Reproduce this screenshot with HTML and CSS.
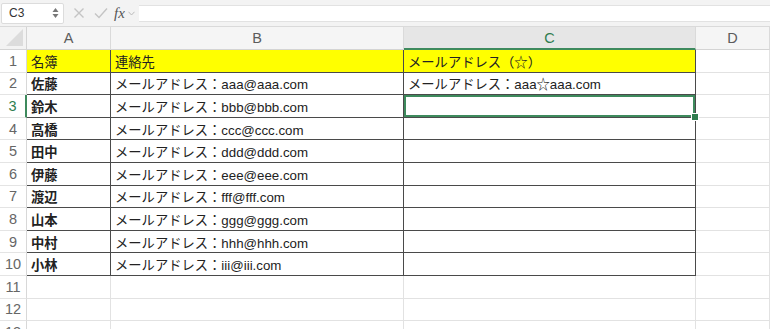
FILE: index.html
```html
<!DOCTYPE html>
<html lang="ja">
<head>
    <meta charset="UTF-8">
    <meta name="viewport" content="width=device-width, initial-scale=1.0">
    <title>名簿</title>
    <link rel="stylesheet" href="styles.css">
</head>
<body>
    <!-- 数式バー -->
    <div class="toolbar">
        <div class="namebox">
            <span>C3</span>
            <svg class="spin" width="7" height="12" viewBox="0 0 7 12">
                <path d="M3.5 1 L6.5 5 L0.5 5 Z" fill="#777"/>
                <path d="M3.5 11 L6.5 7 L0.5 7 Z" fill="#777"/>
            </svg>
        </div>
        <svg class="tool-icon cancel" width="12" height="12" viewBox="0 0 12 12">
            <path d="M1.5 1.5 L10.5 10.5 M10.5 1.5 L1.5 10.5" stroke="#c4c4c4" stroke-width="1.4" fill="none"/>
        </svg>
        <svg class="tool-icon ok" width="14" height="12" viewBox="0 0 14 12">
            <path d="M1 6.5 L5 10.5 L13 1.5" stroke="#c4c4c4" stroke-width="1.4" fill="none"/>
        </svg>
        <span class="fx">fx</span>
        <svg class="chev" width="7" height="5" viewBox="0 0 7 5">
            <path d="M0.5 0.8 L3.5 4 L6.5 0.8" stroke="#bbb" stroke-width="1" fill="none"/>
        </svg>
        <div class="formula"></div>
    </div>

    <!-- シート -->
    <div class="sheet">
        <div class="corner"><div class="tri"></div></div>
        <div class="col-head">A</div>
        <div class="col-head">B</div>
        <div class="col-head active">C</div>
        <div class="col-head">D</div>

        <div class="row-head">1</div>
        <div class="cell data yellow">名簿</div>
        <div class="cell data yellow">連絡先</div>
        <div class="cell data yellow">メールアドレス（☆）</div>
        <div class="cell"></div>

        <div class="row-head">2</div>
        <div class="cell data name">佐藤</div>
        <div class="cell data">メールアドレス：aaa@aaa.com</div>
        <div class="cell data">メールアドレス：aaa☆aaa.com</div>
        <div class="cell"></div>

        <div class="row-head active">3</div>
        <div class="cell data name">鈴木</div>
        <div class="cell data">メールアドレス：bbb@bbb.com</div>
        <div class="cell data selected"><span class="handle"></span></div>
        <div class="cell"></div>

        <div class="row-head">4</div>
        <div class="cell data name">高橋</div>
        <div class="cell data">メールアドレス：ccc@ccc.com</div>
        <div class="cell data"></div>
        <div class="cell"></div>

        <div class="row-head">5</div>
        <div class="cell data name">田中</div>
        <div class="cell data">メールアドレス：ddd@ddd.com</div>
        <div class="cell data"></div>
        <div class="cell"></div>

        <div class="row-head">6</div>
        <div class="cell data name">伊藤</div>
        <div class="cell data">メールアドレス：eee@eee.com</div>
        <div class="cell data"></div>
        <div class="cell"></div>

        <div class="row-head">7</div>
        <div class="cell data name">渡辺</div>
        <div class="cell data">メールアドレス：fff@fff.com</div>
        <div class="cell data"></div>
        <div class="cell"></div>

        <div class="row-head">8</div>
        <div class="cell data name">山本</div>
        <div class="cell data">メールアドレス：ggg@ggg.com</div>
        <div class="cell data"></div>
        <div class="cell"></div>

        <div class="row-head">9</div>
        <div class="cell data name">中村</div>
        <div class="cell data">メールアドレス：hhh@hhh.com</div>
        <div class="cell data"></div>
        <div class="cell"></div>

        <div class="row-head">10</div>
        <div class="cell data name">小林</div>
        <div class="cell data">メールアドレス：iii@iii.com</div>
        <div class="cell data"></div>
        <div class="cell"></div>

        <div class="row-head">11</div>
        <div class="cell"></div>
        <div class="cell"></div>
        <div class="cell"></div>
        <div class="cell"></div>

        <div class="row-head">12</div>
        <div class="cell"></div>
        <div class="cell"></div>
        <div class="cell"></div>
        <div class="cell"></div>

        <div class="row-head">13</div>
        <div class="cell"></div>
        <div class="cell"></div>
        <div class="cell"></div>
        <div class="cell"></div>
    </div>
</body>
</html>
```

FILE: styles.css
```css
body {
    margin: 0;
    width: 770px;
    height: 329px;
    overflow: hidden;
    background: #fff;
    font-family: "Liberation Sans", "Noto Sans CJK JP", sans-serif;
    color: #222;
}
.toolbar {
    display: flex;
    align-items: center;
    height: 27px;
    box-sizing: border-box;
    background-color: #f3f3f3;
    border-bottom: 1px solid #dadada;
}
.namebox {
    display: flex;
    align-items: center;
    justify-content: space-between;
    width: 63px;
    height: 21px;
    margin-left: 1px;
    padding: 0 4px 0 7px;
    box-sizing: border-box;
    background-color: white;
    border: 1px solid #dcdcdc;
    border-radius: 2px;
    font-family: "Liberation Sans", Arial, sans-serif;
    font-size: 12px;
    color: #333;
}
.cancel {
    margin-left: 9px;
}
.ok {
    margin-left: 9px;
}
.fx {
    margin-left: 6px;
    font-family: "Liberation Serif", serif;
    font-style: italic;
    font-size: 15px;
    color: #555;
}
.chev {
    margin-left: 3px;
}
.formula {
    flex: 1;
    height: 17px;
    margin-left: 4px;
    box-sizing: border-box;
    background-color: white;
    border-top: 1px solid #e2e2e2;
    border-bottom: 1px solid #e2e2e2;
}
.sheet {
    display: grid;
    grid-template-columns: 27px 84px 293px 292px 74px;
    grid-template-rows: 23px repeat(13, 22.6px);
}
.corner {
    position: relative;
    background-color: #f3f3f3;
    border-right: 1px solid #d4d4d4;
    border-bottom: 1px solid #d4d4d4;
}
.tri {
    position: absolute;
    right: 3px;
    bottom: 3px;
    width: 0;
    height: 0;
    border-left: 17px solid transparent;
    border-bottom: 17px solid #dcdcdc;
}
.col-head {
    display: flex;
    align-items: center;
    justify-content: center;
    background-color: #f5f5f5;
    border-right: 1px solid #dadada;
    border-bottom: 1px solid #d4d4d4;
    font-size: 14.5px;
    color: #5c5c5c;
}
.col-head.active {
    background-color: #e6e6e6;
    color: #2f7d4f;
    border-bottom: 2px solid #3e8a5d;
}
.row-head {
    display: flex;
    align-items: center;
    justify-content: center;
    background-color: #fff;
    border-right: 1px solid #d8d8d8;
    border-bottom: 1px solid #e4e4e4;
    font-size: 14.5px;
    color: #666;
}
.row-head.active {
    color: #2f7d4f;
    border-right: 2px solid #3e8a5d;
}
.cell {
    position: relative;
    display: flex;
    align-items: center;
    padding: 1px 4px 0;
    box-sizing: border-box;
    border-right: 1px solid #e2e2e2;
    border-bottom: 1px solid #e2e2e2;
    font-size: 13.3px;
    white-space: nowrap;
}
.cell.data {
    border-right-color: #4a4a4a;
    border-bottom-color: #4a4a4a;
}
.yellow {
    background-color: #ffff00;
}
.name {
    font-weight: 600;
}
.selected {
    box-shadow: inset 0 0 0 2px #3e8a5d;
}
.handle {
    position: absolute;
    right: -4px;
    bottom: -4px;
    width: 6px;
    height: 6px;
    background-color: #2f7d4f;
    border: 1px solid white;
    z-index: 2;
}
```
